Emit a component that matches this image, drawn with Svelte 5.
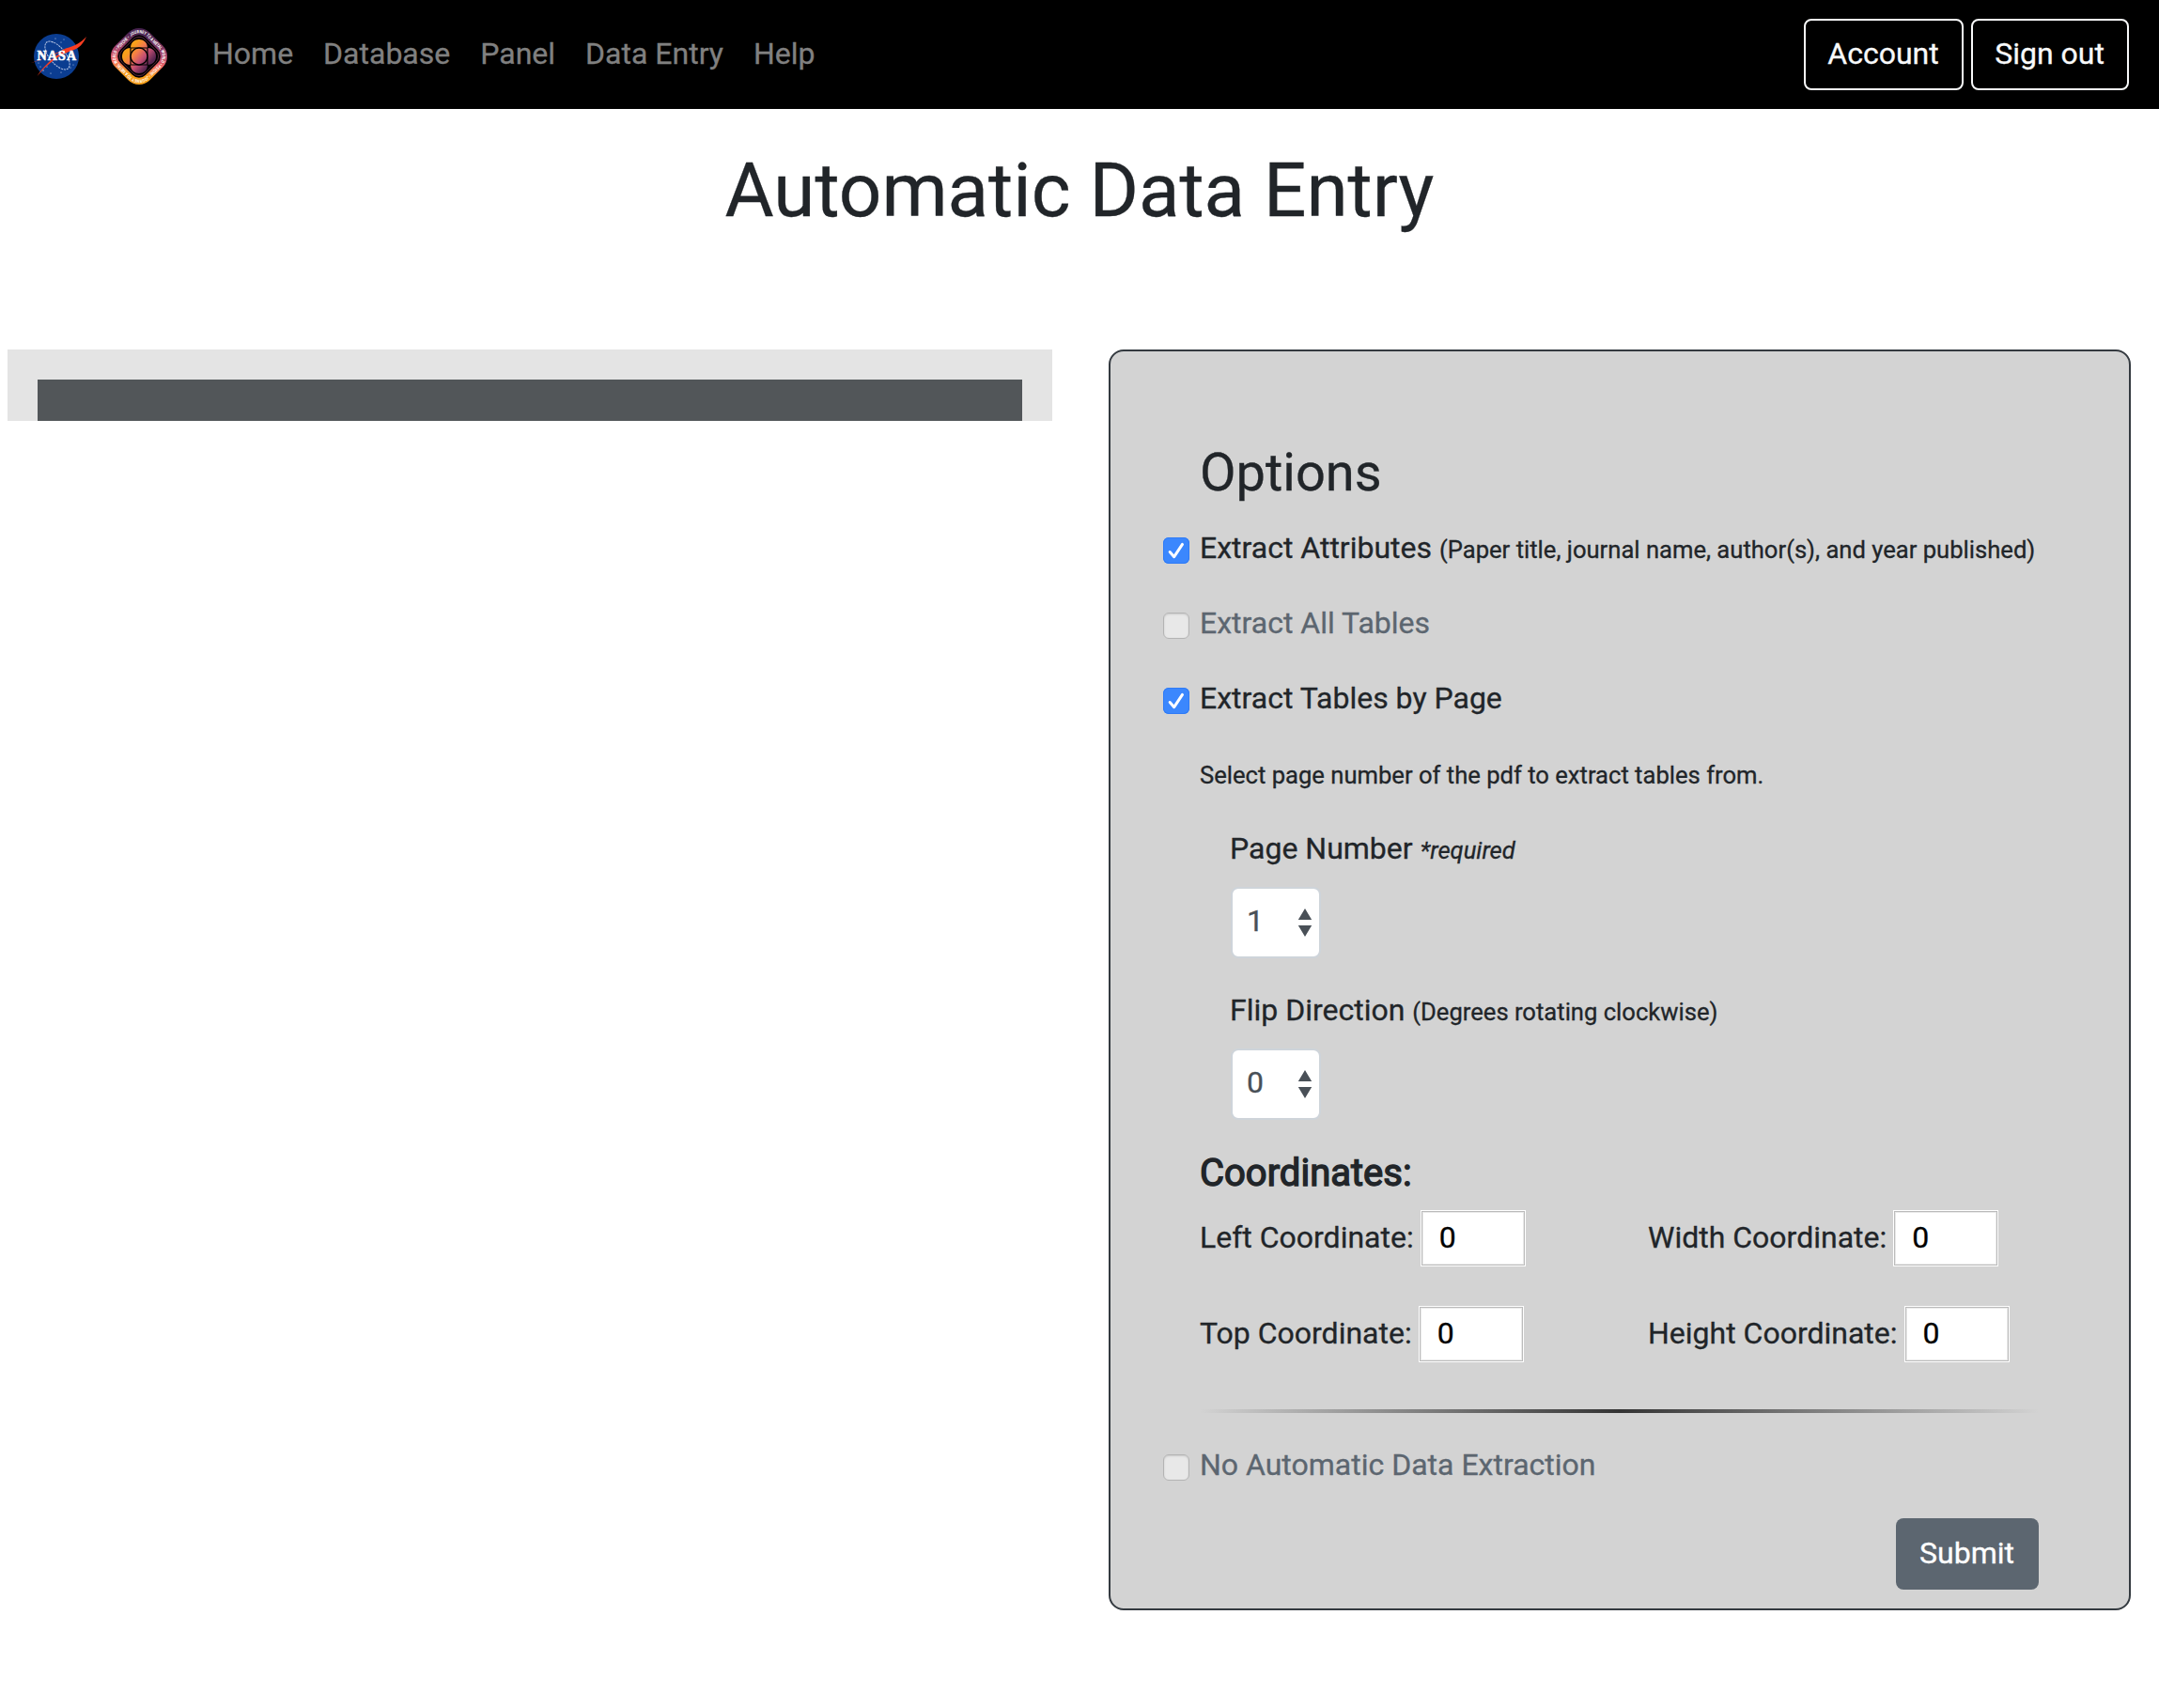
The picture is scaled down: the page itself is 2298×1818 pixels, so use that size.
<script>
  let extractAttributes = $state(true);
  let extractAll = $state(false);
  let extractByPage = $state(true);
  let noExtraction = $state(false);
  const links = ['Home', 'Database', 'Panel', 'Data Entry', 'Help'];
  const columns = [
    ['Left Coordinate:', 'Top Coordinate:'],
    ['Width Coordinate:', 'Height Coordinate:']
  ];
</script>

{#snippet box(on)}
  <span class="box" class:on>
    {#if on}
      <svg viewBox="0 0 28 28"><path d="M7.200 15.500 11.700 20.700 20.500 7.400" /></svg>
    {/if}
  </span>
{/snippet}

{#snippet select(value)}
  <div class="select">
    <span>{value}</span>
    <svg viewBox="0 0 16 30"><path d="M8 0 .8 12h14.400zM8 30 .8 18h14.400z" /></svg>
  </div>
{/snippet}

<nav>
  <svg class="nasa" viewBox="0 0 60 48">
    <circle cx="28" cy="24" r="24" fill="#0b3d91" />
    <g fill="#c9d6ee">
      <circle cx="27" cy="5" r=".6" /><circle cx="33" cy="9" r=".5" /><circle cx="11" cy="35" r=".6" />
      <circle cx="14" cy="39" r=".7" /><circle cx="22" cy="42" r=".6" /><circle cx="33" cy="41" r=".6" />
      <circle cx="43" cy="36" r=".6" /><circle cx="46" cy="33" r=".5" /><circle cx="9" cy="31" r=".5" />
      <circle cx="36" cy="6" r=".5" /><circle cx="18" cy="35" r=".6" /><circle cx="24" cy="9" r=".5" />
    </g>
    <ellipse cx="29" cy="23" rx="8.5" ry="18" transform="rotate(-39 29 23)" fill="none" stroke="#b9c7e6" stroke-width="1" stroke-dasharray="2.2 .8" />
    <path d="M0 31.500C14 27 27 21 38 15.500 48 13 55 8.500 60 3 57 10 52 16 44 18 29 23 17 34 7.500 45 14 35 24 25 36 18.500 24 22 12 27 0 31.500z" fill="#fc3d21" />
    <text x="7.500" y="28.400" textLength="41.500">NASA</text>
  </svg>
  <svg class="psyche" viewBox="0 0 60 60">
    <defs>
      <linearGradient id="rim" gradientUnits="userSpaceOnUse" x1="12" y1="8" x2="46" y2="54">
        <stop offset=".08" stop-color="#482350" /><stop offset=".4" stop-color="#a3426b" />
        <stop offset=".62" stop-color="#f0696a" /><stop offset=".85" stop-color="#f9a01b" />
      </linearGradient>
      <linearGradient id="core" gradientUnits="userSpaceOnUse" x1="14" y1="18" x2="44" y2="44">
        <stop offset=".2" stop-color="#f9a01b" /><stop offset=".4" stop-color="#f47c4a" />
        <stop offset=".6" stop-color="#c54f72" /><stop offset=".85" stop-color="#592651" />
      </linearGradient>
      <path id="words" d="M21.500 8.800A12 12 0 0 1 38.500 8.800L51.200 21.500A12 12 0 0 1 51.200 38.500L38.500 51.200A12 12 0 0 1 21.500 51.200L8.800 38.500A12 12 0 0 1 8.800 21.500Z" />
    </defs>
    <rect x="4" y="4" width="52" height="52" rx="16.300" transform="rotate(45 30 30)" fill="url(#rim)" />
    <rect x="11" y="11" width="38" height="38" rx="10" transform="rotate(45 30 30)" fill="#000" />
    <rect x="12.800" y="12.800" width="34.400" height="34.400" rx="9" transform="rotate(45 30 30)" fill="none" stroke="#8d3f62" stroke-width=".6" />
    <path d="M21 21C21 9 39 9 39 21 51 21 51 39 39 39 39 51 21 51 21 39 9 39 9 21 21 21z" fill="url(#core)" />
    <path d="M21 21h18v18H21z" fill="none" stroke="#000" stroke-width="1.200" />
    <circle cx="30" cy="30" r="9" fill="url(#core)" stroke="#000" stroke-width="1.400" />
    <text><textPath href="#words" textLength="145" lengthAdjust="spacingAndGlyphs">JOURNEY TO A METAL WORLD • PSYCHE • JOURNEY TO A METAL WORLD • PSYCHE •</textPath></text>
  </svg>
  <div class="links">
    {#each links as link}<a href="#top">{link}</a>{/each}
  </div>
  <button class="outline account">Account</button>
  <button class="outline signout">Sign out</button>
</nav>

<h1>Automatic Data Entry</h1>

<main>
  <div class="viewer"><div class="pdf"></div></div>

  <section class="card">
    <h3>Options</h3>
    <label class="check">
      {@render box(extractAttributes)}
      <span>Extract Attributes <small>(Paper title, journal name, author(s), and year published)</small></span>
    </label>
    <label class="check muted">{@render box(extractAll)}<span>Extract All Tables</span></label>
    <label class="check">{@render box(extractByPage)}<span>Extract Tables by Page</span></label>
    <p class="hint"><small>Select page number of the pdf to extract tables from.</small></p>

    <div class="field">
      <div>Page Number <small><i>*required</i></small></div>
      {@render select(1)}
    </div>
    <div class="field">
      <div>Flip Direction <small>(Degrees rotating clockwise)</small></div>
      {@render select(0)}
    </div>

    <h4>Coordinates:</h4>
    <div class="coords">
      {#each columns as column}
        <div class="column">
          {#each column as label}
            <div class="coord"><span class="label">{label}</span><span class="num">0</span></div>
          {/each}
        </div>
      {/each}
    </div>

    <hr />
    <label class="check muted last">{@render box(noExtraction)}<span>No Automatic Data Extraction</span></label>
    <button class="submit">Submit</button>
  </section>
</main>

<style>
  :global(body) {
    margin: 0;
    background: #fff;
    color: #212529;
    font: 32px/1.5 Roboto, 'Liberation Sans', sans-serif;
    -webkit-text-stroke: 0.3px;
  }
  nav {
    box-sizing: border-box;
    height: 116px;
    padding: 0 32px;
    background: #000;
    display: flex;
    align-items: center;
  }
  .nasa {
    width: 60px;
    height: 48px;
    margin-top: 4px;
  }
  .nasa text {
    font: bold 14px 'Liberation Serif', serif;
    fill: #fff;
    stroke: #fff;
    stroke-width: 0.6px;
  }
  .psyche {
    width: 60px;
    height: 60px;
    margin: 4px 0 0 26px;
    overflow: visible;
  }
  .psyche text {
    font: bold 4.8px Roboto, sans-serif;
    fill: #fff;
    -webkit-text-stroke: 0;
  }
  .links {
    display: flex;
    gap: 32px;
    margin: -2px 0 0 48px;
    flex: 1;
  }
  .links a {
    color: #808080;
    text-decoration: none;
  }
  button {
    box-sizing: border-box;
    height: 76px;
    padding: 0 1px 2px 0;
    border-radius: 8px;
    font: inherit;
    -webkit-text-stroke: inherit;
  }
  .outline {
    border: 2px solid #f8f9fa;
    background: transparent;
    color: #f8f9fa;
  }
  .account {
    width: 170px;
    margin-right: 8px;
  }
  .signout {
    width: 168px;
  }
  h1 {
    margin: 39px 0 0;
    height: 96px;
    font-size: 80px;
    line-height: 96px;
    font-weight: 400;
    text-align: center;
  }
  main {
    display: grid;
    grid-template-columns: 1112px 1088px;
    gap: 60px;
    align-items: start;
    padding: 121px 0 0 8px;
  }
  .viewer {
    background: #e4e4e4;
    padding: 32px 32px 0;
  }
  .pdf {
    height: 44px;
    background: #525659;
  }
  .card {
    box-sizing: border-box;
    height: 1342px;
    padding: 95px 96px 20px 95px;
    border: 2px solid #343a40;
    border-radius: 16px;
    background: #d3d3d3;
    display: flex;
    flex-direction: column;
  }
  h3 {
    margin: 0 0 22px;
    font-size: 56px;
    line-height: 68px;
    font-weight: 400;
  }
  .check {
    display: flex;
    gap: 11px;
    height: 48px;
    margin: 0 0 32px -39px;
    white-space: nowrap;
  }
  small {
    font-size: 25.6px;
  }
  .muted {
    color: #5c6670;
  }
  .box {
    box-sizing: border-box;
    width: 28px;
    height: 28px;
    margin-top: 13px;
    border: 1px solid #b4b4b4;
    border-radius: 6px;
    background: #e8e8e8;
    box-shadow: inset 0 1px 2px #c8c8c8;
  }
  .box.on {
    border: 0;
    background: #3b87fd;
    box-shadow: inset 0 0 0 1px #2f7bf6;
  }
  .box svg {
    display: block;
    width: 28px;
    height: 28px;
    fill: none;
    stroke: #fff;
    stroke-width: 3px;
    stroke-linecap: round;
    stroke-linejoin: round;
  }
  .hint {
    margin: 0 0 32px;
    height: 48px;
  }
  .field {
    margin: 0 0 31px 32px;
  }
  .select {
    box-sizing: border-box;
    display: flex;
    align-items: center;
    justify-content: space-between;
    width: 96px;
    height: 76px;
    margin-top: 17px;
    margin-left: 1px;
    padding: 0 7px 0 15px;
    border: 2px solid #ced4da;
    border-radius: 8px;
    background: #fff;
    color: #495057;
  }
  .select span {
    margin-top: -4px;
  }
  .select svg {
    width: 16px;
    height: 30px;
    fill: #495057;
  }
  h4 {
    margin: 2px 0 15px;
    font-size: 40px;
    line-height: 48px;
    font-weight: 400;
    -webkit-text-stroke: 1.4px #212529;
  }
  .coords {
    display: grid;
    grid-template-columns: 477px 1fr;
  }
  .column {
    display: flex;
    flex-direction: column;
    gap: 42px;
  }
  .coord {
    display: flex;
    align-items: center;
    gap: 7px;
    height: 60px;
  }
  .label {
    margin-top: -2px;
  }
  .num {
    box-sizing: border-box;
    width: 112px;
    height: 60px;
    padding-left: 19px;
    border: 1px solid #fff;
    outline: 1px solid #bbb;
    outline-offset: -2px;
    box-shadow: inset 0 0 0 2px #e9e9e9;
    background: #fff;
    color: #000;
    line-height: 56px;
  }
  hr {
    width: 893px;
    height: 4px;
    margin: 50px 0 31px;
    border: 0;
    background: linear-gradient(to right, transparent, #333, transparent);
  }
  .last {
    margin-bottom: 33px;
  }
  .submit {
    align-self: flex-end;
    width: 152px;
    border: 0;
    background: #5c6670;
    color: #fff;
  }
</style>
